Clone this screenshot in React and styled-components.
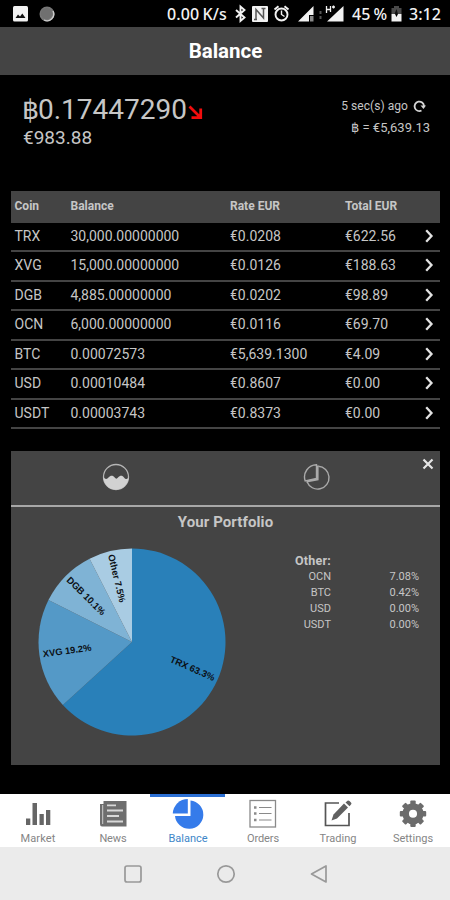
import React from 'react';
import styled, { createGlobalStyle } from 'styled-components';

const GlobalStyle = createGlobalStyle`
  * {
    box-sizing: border-box;
  }
  body {
    margin: 0;
    background: #000;
    font-family: Roboto, 'Liberation Sans', sans-serif;
  }
`;

const Screen = styled.div`
  display: flex;
  flex-direction: column;
  width: 450px;
  height: 900px;
  overflow: hidden;
  background: #000;
  color: #c6c6c6;
`;

// Status bar
const StatusBar = styled.div`
  display: flex;
  align-items: center;
  flex: none;
  height: 27px;
  padding: 0 9px 0 13px;
  color: #f2f2f2;
  font-family: 'Noto Sans', 'Open Sans', sans-serif;
  font-size: 16px;
  font-weight: 500;

  svg {
    display: block;
    flex: none;
  }
`;

const StatusItem = styled.span`
  display: block;
  flex: none;
  width: ${({ $width }) => $width}px;
  margin-left: ${({ $gap }) => $gap || 0}px;
  padding-top: 1px;
  line-height: 27px;
  letter-spacing: ${({ $spacing }) => $spacing || 0}px;
  word-spacing: ${({ $word }) => $word || 0}px;
  white-space: nowrap;
`;

const IconSlot = styled.span`
  margin-left: ${({ $gap }) => $gap}px;
`;

const TitleBar = styled.header`
  display: flex;
  align-items: center;
  justify-content: center;
  flex: none;
  height: 48px;
  padding: 0 0 1px 1px;
  background: #444;
  color: #fff;
  font-size: 20.5px;
  font-weight: 700;
`;

// Totals above the table
const Summary = styled.section`
  display: flex;
  justify-content: space-between;
  flex: none;
  height: 116px;
  padding: 18px 20px 0 22px;
`;

const TotalBtc = styled.div`
  display: flex;
  align-items: center;
  height: 34px;
  font-size: 28px;
  line-height: 34px;

  svg {
    margin: 4px 0 0 1px;
  }
`;

const BahtSign = styled.span`
  width: 16px;
  font-size: 27px;
`;

const TotalEur = styled.div`
  padding-left: 1px;
  font-size: 19px;
  line-height: 22px;
`;

const RateInfo = styled.div`
  display: flex;
  flex-direction: column;
  align-items: flex-end;
  font-size: 13px;
  line-height: 22px;
  padding-top: 2px;
`;

const Updated = styled.div`
  display: flex;
  align-items: center;
  gap: 5px;
  padding-right: 4px;
  font-size: 12px;
  letter-spacing: 0.05px;
`;

// Coin table
const Table = styled.div`
  flex: none;
  width: 429px;
  margin-left: 11px;
`;

const Row = styled.div`
  display: grid;
  grid-template-columns: 56px 159.5px 115px 79.5px 19px;
  align-items: center;
  height: 29.5px;
  border-bottom: 2px solid #444;
  font-size: 14px;
  padding-bottom: 1.5px;
`;

const HeadRow = styled(Row)`
  height: 31.5px;
  padding-bottom: 0;
  background: #444;
  font-size: 12px;
  font-weight: 700;
`;

const Cell = styled.div`
  padding-left: 3.5px;
  white-space: nowrap;

  svg {
    display: block;
  }
`;

// Portfolio panel
const Panel = styled.section`
  position: relative;
  flex: none;
  width: 429px;
  height: 314px;
  margin: 21.5px 0 0 11px;
  background: #444;
`;

const PanelTabs = styled.div`
  display: flex;
  height: 56px;
  border-bottom: 2px solid #a8a8a8;
`;

const PanelTab = styled.div`
  display: flex;
  align-items: center;
  justify-content: center;
  width: ${({ $width }) => $width}px;
  padding-bottom: 2px;
`;

const CloseButton = styled.div`
  position: absolute;
  top: 7px;
  right: 6px;
  width: 12px;
  height: 12px;

  svg {
    display: block;
  }
`;

const PanelTitle = styled.h2`
  margin: 0;
  padding-top: 5px;
  font-size: 15px;
  line-height: 20px;
  font-weight: 700;
  text-align: center;
  letter-spacing: 0.1px;
`;

const PanelBody = styled.div`
  display: flex;
`;

const PieChart = styled.svg`
  flex: none;
  margin: 16px 0 0 27px;
`;

const PieLabel = styled.text`
  fill: #0b0f14;
  font-family: 'Liberation Sans', Arial, sans-serif;
  font-size: 9.4px;
  font-weight: 700;
`;

const OtherList = styled.div`
  width: 124px;
  margin: 20px 0 0 69px;
`;

const OtherTitle = styled.div`
  width: 37px;
  font-size: 12.5px;
  font-weight: 700;
  line-height: 18px;
  letter-spacing: 0.2px;
  white-space: nowrap;
`;

const OtherRow = styled.div`
  display: flex;
  height: 16.3px;
  font-size: 11px;
  line-height: 13px;

  span:first-child {
    width: 36px;
    text-align: right;
  }

  span:last-child {
    flex: 1;
    text-align: right;
  }
`;

// Bottom tabs
const TabBar = styled.nav`
  display: flex;
  flex: none;
  height: 53px;
  margin-top: 29px;
  background: #fff;
`;

const Tab = styled.div`
  display: flex;
  flex-direction: column;
  align-items: center;
  width: 75px;
  border-top: 3px solid ${({ $active }) => ($active ? '#2b6fd3' : '#fff')};
  padding: 1px 0 0 1px;
  color: ${({ $active }) => ($active ? '#3d86c8' : '#858585')};
  font-size: 11px;
  line-height: 14px;
  letter-spacing: ${({ $spacing }) => $spacing || 0}px;

  svg {
    display: block;
    margin-bottom: 2px;
  }
`;

const SystemNav = styled.div`
  display: flex;
  align-items: center;
  justify-content: center;
  gap: 73px;
  flex: 1;
  padding: 1px 0 0 1px;
  background: #ebebeb;

  svg {
    display: block;
  }
`;

const coins = [
  ['TRX', '30,000.00000000', '€0.0208', '€622.56'],
  ['XVG', '15,000.00000000', '€0.0126', '€188.63'],
  ['DGB', '4,885.00000000', '€0.0202', '€98.89'],
  ['OCN', '6,000.00000000', '€0.0116', '€69.70'],
  ['BTC', '0.00072573', '€5,639.1300', '€4.09'],
  ['USD', '0.00010484', '€0.8607', '€0.00'],
  ['USDT', '0.00003743', '€0.8373', '€0.00'],
];

const slices = [
  { name: 'TRX', value: 63.3, color: '#2980b9' },
  { name: 'XVG', value: 19.2, color: '#5499c7' },
  { name: 'DGB', value: 10.1, color: '#7fb3d5' },
  { name: 'Other', value: 7.5, color: '#a9cce3' },
];

const others = [
  ['OCN', '7.08%'],
  ['BTC', '0.42%'],
  ['USD', '0.00%'],
  ['USDT', '0.00%'],
];

const RADIUS = 93.5;

function point(deg, r) {
  const rad = ((deg - 90) * Math.PI) / 180;
  return [r * Math.cos(rad), r * Math.sin(rad)];
}

function Pie() {
  let start = 0;
  const total = slices.reduce((sum, s) => sum + s.value, 0);
  return (
    <PieChart width="188" height="188" viewBox="-94 -94 188 188">
      {slices.map((s) => {
        const from = start;
        const to = start + (s.value / total) * 360;
        start = to;
        const mid = (from + to) / 2;
        const [x1, y1] = point(from, RADIUS);
        const [x2, y2] = point(to, RADIUS);
        const left = mid > 180;
        return (
          <g key={s.name}>
            <path
              d={`M0 0L${x1} ${y1}A${RADIUS} ${RADIUS} 0 ${to - from > 180 ? 1 : 0} 1 ${x2} ${y2}Z`}
              fill={s.color}
            />
            <PieLabel
              transform={`rotate(${left ? mid - 270 : mid - 90})`}
              x={left ? -90 : 90}
              y="3"
              textAnchor={left ? 'start' : 'end'}
            >
              {s.name} {s.value}%
            </PieLabel>
          </g>
        );
      })}
    </PieChart>
  );
}

function PictureIcon() {
  return (
    <svg width="15" height="16" viewBox="0 0 15 16">
      <rect width="15" height="15.5" rx="1.5" fill="#f2f2f2" />
      <path d="M2.5 12L5 8.5L7 10.5L9.3 7.5L12.5 12Z" fill="#111" />
    </svg>
  );
}

function SphereIcon() {
  return (
    <svg width="16" height="16" viewBox="0 0 16 16">
      <circle cx="8" cy="8" r="7.5" fill="#777" />
      <path d="M14 5A6.700 6.700 0 0 1 5 14" fill="none" stroke="#ccc" strokeWidth="1.4" />
      <circle cx="7.500" cy="7.500" r="5.500" fill="#707070" />
    </svg>
  );
}

function StatusIcons() {
  return (
    <svg width="110" height="20" viewBox="234 4 110 20" fill="none" stroke="#f2f2f2">
      {/* bluetooth */}
      <path d="M236 10L244.5 17.5L240.5 21V6.500L244.500 10L236 17.500" strokeWidth="1.9" />
      {/* nfc */}
      <rect x="252" y="6" width="16" height="16" rx="1" fill="#f2f2f2" stroke="none" />
      <path d="M256 19.500V9.500L263.500 18V8.500M254 19.500H257M261.500 8.500H265.500" stroke="#555" strokeWidth="1.500" />
      {/* alarm */}
      <circle cx="281.500" cy="14.500" r="6" strokeWidth="1.900" />
      <path d="M281.500 10.500V14.500L284.500 16.500" strokeWidth="1.400" />
      <path d="M274.500 9.500L278.500 6.300M288.500 9.500L284.500 6.300" strokeWidth="2" />
      {/* sim 1 */}
      <path d="M298 21.500L313.500 6V15H309V21.500Z" fill="#f2f2f2" stroke="none" />
      <rect x="310" y="16" width="3.500" height="5.500" fill="#888" stroke="none" />
      <path d="M320.500 11V14M320.500 16V19" stroke="#555" strokeWidth="2" />
      {/* sim 2 */}
      <path d="M327 21.500L343.500 6V21.500Z" fill="#f2f2f2" stroke="none" />
      <path d="M326.500 6V13M330.500 6V12M326.500 9.500H330.500M332 7H335M333.500 5.500V8.500" strokeWidth="1.300" />
    </svg>
  );
}

function BatteryIcon() {
  return (
    <svg width="11" height="16" viewBox="0 0 11 16">
      <path d="M3 0H8V2H10.500V8H.5V2H3Z" fill="#4a4a4a" />
      <path d="M.5 8H4L5.500 11L7 8H10.500V15.500H.5Z" fill="#f2f2f2" />
      <path d="M5.500 3L3.500 8H7Z" fill="#111" />
    </svg>
  );
}

function Chevron() {
  return (
    <svg width="9" height="14" viewBox="0 0 9 14">
      <path d="M1.200 1.200L6.500 7L1.200 12.800" fill="none" stroke="#e2e2e2" strokeWidth="2.300" />
    </svg>
  );
}

function WaveIcon() {
  return (
    <svg width="28" height="28" viewBox="0 0 28 28">
      <circle cx="14" cy="14" r="12.500" fill="none" stroke="#b5b5b5" strokeWidth="1.300" />
      <path
        d="M1.500 14C3 16.500 5 16.500 6.500 14.500C8.500 12 11 12 12.700 14.500C13.700 16 15 16 16 14.500C18 12 20.500 12 22 14.500C23.500 16.500 25 16.500 26.500 14.500A12.500 12.500 0 0 1 1.500 14Z"
        fill="#d2d2d2"
      />
    </svg>
  );
}

function PieOutlineIcon() {
  return (
    <svg width="28" height="28" viewBox="0 0 28 28" fill="none" stroke="#aaa" strokeWidth="1.400">
      <path d="M15.300 3.300A11.400 11.400 0 1 1 4 18.800" />
      <path d="M13.500 1.700A12.300 12.300 0 0 0 2.200 18L13.500 15.500Z" />
      <path d="M14.500 2.500V16.300L3.500 18.500" strokeWidth="2.200" />
    </svg>
  );
}

function MarketIcon() {
  return (
    <svg width="32" height="32" viewBox="0 0 32 32" fill="#666">
      <rect x="4" y="20.500" width="4.300" height="6.500" />
      <rect x="10.500" y="5" width="4.500" height="22" />
      <rect x="17.500" y="16" width="4.300" height="11" />
      <rect x="24" y="12" width="4.300" height="15" />
    </svg>
  );
}

function NewsIcon() {
  return (
    <svg width="32" height="32" viewBox="0 0 32 32">
      <path d="M6.500 3H29.500V28.500H5Q3 28.500 3 26V6H6.500Z" fill="#6e6e6e" />
      <path d="M5.700 7V26" stroke="#ccc" strokeWidth="1" />
      <path d="M10 7.300H19M10 12.500H26M10 18H22M10 23.500H26" stroke="#d8d8d8" strokeWidth="1.800" />
    </svg>
  );
}

function BalanceIcon() {
  return (
    <svg width="32" height="32" viewBox="0 0 32 32" fill="#357bea">
      <path d="M18.500 2.500A14.200 14.200 0 1 1 3 18H18.500Z" />
      <path d="M15.800 1A15 15 0 0 0 .8 15.500H15.800Z" />
    </svg>
  );
}

function OrdersIcon() {
  return (
    <svg width="32" height="32" viewBox="0 0 32 32" fill="none" stroke="#8a8a8a">
      <rect x="3" y="2.500" width="25.500" height="26.500" strokeWidth="1.300" />
      <path d="M12 9.500H24.500M12 15.500H24.500M12 22H24.500" strokeWidth="1.200" />
      <path d="M7 9.500H9.500M7 15.500H9.500M7 22H9.500" strokeWidth="2.300" />
    </svg>
  );
}

function TradingIcon() {
  return (
    <svg width="32" height="32" viewBox="0 0 32 32" fill="none">
      <path d="M17 5H3.500V27.500H27V15" stroke="#555" strokeWidth="1.700" />
      <path d="M11.500 16.500L22 5.500L26 9.500L15 20.500L9.500 22.500Z" fill="#606060" />
      <path d="M23.500 4.500L25.500 2.700Q26.500 2 27.500 3L29 4.500Q30 5.500 29 6.500L27.500 8.200Z" fill="#606060" />
    </svg>
  );
}

function SettingsIcon() {
  return (
    <svg width="32" height="32" viewBox="0 0 32 32" fill="#6c6c6c">
      <circle cx="16" cy="15.700" r="7.300" fill="none" stroke="#6c6c6c" strokeWidth="6.500" />
      {[0, 45, 90, 135, 180, 225, 270, 315].map((deg) => (
        <rect
          key={deg}
          x="13.300"
          y="2.500"
          width="5.400"
          height="5"
          rx="1"
          transform={`rotate(${deg} 16 15.700)`}
        />
      ))}
    </svg>
  );
}

const tabs = [
  { label: 'Market', Icon: MarketIcon, spacing: 0.1 },
  { label: 'News', Icon: NewsIcon, spacing: -0.1 },
  { label: 'Balance', Icon: BalanceIcon, active: true, spacing: 0 },
  { label: 'Orders', Icon: OrdersIcon, spacing: -0.1 },
  { label: 'Trading', Icon: TradingIcon, spacing: 0 },
  { label: 'Settings', Icon: SettingsIcon, spacing: 0 },
];

export default function App() {
  return (
    <>
      <GlobalStyle />
      <Screen>
        <StatusBar>
          <PictureIcon />
          <IconSlot $gap={11}>
            <SphereIcon />
          </IconSlot>
          <StatusItem $width={67} $gap={112} $word={-1} $spacing={0.1}>
            0.00 K/s
          </StatusItem>
          <StatusIcons />
          <StatusItem $width={39} $gap={8} $word={-1}>
            45 %
          </StatusItem>
          <BatteryIcon />
          <StatusItem $width={33} $gap={7}>
            3:12
          </StatusItem>
        </StatusBar>

        <TitleBar>Balance</TitleBar>

        <Summary>
          <div>
            <TotalBtc>
              <BahtSign>฿</BahtSign>0.17447290
              <svg width="15" height="15" viewBox="0 0 15 15" fill="none" stroke="#f10d0d" strokeWidth="2.800">
                <path d="M1.500 1.500L12 12M12.700 3.500V12.700H3.500" />
              </svg>
            </TotalBtc>
            <TotalEur>€983.88</TotalEur>
          </div>
          <RateInfo>
            <Updated>
              5 sec(s) ago
              <svg width="13" height="13" viewBox="0 0 13 13">
                <path d="M8.500 10.500A4.700 4.700 0 1 1 11 6" fill="none" stroke="#d4d4d4" strokeWidth="1.800" />
                <path d="M7.500 5.500H13L10.500 9Z" fill="#d4d4d4" />
              </svg>
            </Updated>
            <div>฿ = €5,639.13</div>
          </RateInfo>
        </Summary>

        <Table>
          <HeadRow>
            <Cell>Coin</Cell>
            <Cell>Balance</Cell>
            <Cell>Rate EUR</Cell>
            <Cell>Total EUR</Cell>
            <Cell />
          </HeadRow>
          {coins.map(([coin, balance, rate, total]) => (
            <Row key={coin}>
              <Cell>{coin}</Cell>
              <Cell>{balance}</Cell>
              <Cell>{rate}</Cell>
              <Cell>{total}</Cell>
              <Cell>
                <Chevron />
              </Cell>
            </Row>
          ))}
        </Table>

        <Panel>
          <PanelTabs>
            <PanelTab $width={210}>
              <WaveIcon />
            </PanelTab>
            <PanelTab $width={192}>
              <PieOutlineIcon />
            </PanelTab>
          </PanelTabs>
          <CloseButton>
            <svg width="12" height="12" viewBox="0 0 12 12">
              <path d="M1.500 1.500L10.500 10.500M10.500 1.500L1.500 10.500" stroke="#e6e6e6" strokeWidth="2.200" />
            </svg>
          </CloseButton>
          <PanelTitle>Your Portfolio</PanelTitle>
          <PanelBody>
            <Pie />
            <OtherList>
              <OtherTitle>Other:</OtherTitle>
              {others.map(([name, share]) => (
                <OtherRow key={name}>
                  <span>{name}</span>
                  <span>{share}</span>
                </OtherRow>
              ))}
            </OtherList>
          </PanelBody>
        </Panel>

        <TabBar>
          {tabs.map(({ label, Icon, active, spacing }) => (
            <Tab key={label} $active={active} $spacing={spacing}>
              <Icon />
              {label}
            </Tab>
          ))}
        </TabBar>

        <SystemNav>
          <svg width="20" height="20" viewBox="0 0 20 20" fill="none" stroke="#999" strokeWidth="1.700">
            <rect x="2" y="2" width="16" height="16" rx="2" />
          </svg>
          <svg width="20" height="20" viewBox="0 0 20 20" fill="none" stroke="#999" strokeWidth="1.700">
            <circle cx="10" cy="10" r="8.200" />
          </svg>
          <svg width="20" height="20" viewBox="0 0 20 20" fill="none" stroke="#999" strokeWidth="1.700">
            <path d="M17 2V18L2.500 10Z" strokeLinejoin="round" />
          </svg>
        </SystemNav>
      </Screen>
    </>
  );
}
